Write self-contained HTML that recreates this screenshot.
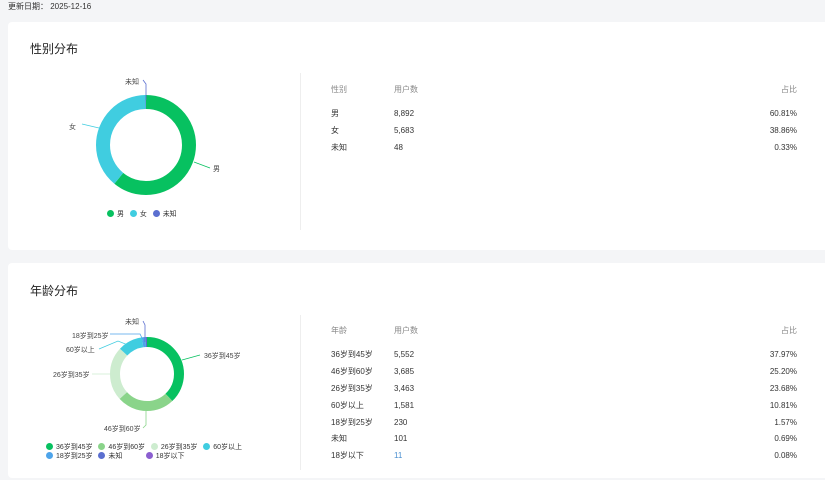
<!DOCTYPE html>
<html><head><meta charset="utf-8"><style>
body{margin:0;width:825px;height:480px;background:#f4f5f7;font-family:"Liberation Sans","Noto Sans CJK SC",sans-serif;color:#333;overflow:hidden;position:relative}
.abs{position:absolute}
.card{position:absolute;left:8px;width:830px;background:#fff;border-radius:4px}
.t{font-size:8px;white-space:nowrap;line-height:10px}
.g{color:#888}
.title{font-size:12px;color:#222}
.vd{position:absolute;left:300px;width:1px;background:#eee}
.dot{display:inline-block;width:7px;height:7px;border-radius:50%;vertical-align:-1px;margin-right:3px}
</style></head><body>
<div class="abs t" style="left:8px;top:2px;color:#333">更新日期： 2025-12-16</div>
<div class="card" style="top:22px;height:228px"></div>
<div class="card" style="top:263px;height:215px"></div>
<div class="abs title" style="left:30px;top:40px">性别分布</div>
<div class="abs title" style="left:30px;top:282px">年龄分布</div>
<div class="vd" style="top:73px;height:157px"></div>
<div class="vd" style="top:315px;height:155px"></div>

<svg class="abs" style="left:0;top:0" width="300" height="480">
<g transform="rotate(-90 146 145)" fill="none" stroke-width="14">
<circle cx="146" cy="145" r="43" stroke="#07c160" stroke-dasharray="164.3 300"/>
<circle cx="146" cy="145" r="43" stroke="#40cde0" stroke-dasharray="105 300" stroke-dashoffset="-164.3"/>
<circle cx="146" cy="145" r="43" stroke="#5b6fd0" stroke-dasharray="0.9 300" stroke-dashoffset="-269.3"/>
</g>
<g fill="none" stroke-width="0.8">
<path d="M194 162 L210 168" stroke="#07c160"/>
<path d="M99 128 L82 124" stroke="#40cde0"/>
<path d="M146 100 L146 84 L143 80" stroke="#5b6fd0"/>
</g>
<g font-size="7" fill="#444">
<text x="213" y="171">男</text><text x="69" y="129">女</text><text x="125" y="84">未知</text>
</g>
<g transform="rotate(-90 147 374)" fill="none" stroke-width="10">
<circle cx="147" cy="374" r="32" stroke="#07c160" stroke-dasharray="76.3 300"/>
<circle cx="147" cy="374" r="32" stroke="#8ad48a" stroke-dasharray="50.7 300" stroke-dashoffset="-76.3"/>
<circle cx="147" cy="374" r="32" stroke="#cdeccf" stroke-dasharray="47.6 300" stroke-dashoffset="-127"/>
<circle cx="147" cy="374" r="32" stroke="#40cde0" stroke-dasharray="21.7 300" stroke-dashoffset="-174.6"/>
<circle cx="147" cy="374" r="32" stroke="#4ea4ea" stroke-dasharray="3.2 300" stroke-dashoffset="-196.3"/>
<circle cx="147" cy="374" r="32" stroke="#5b6fd0" stroke-dasharray="1.4 300" stroke-dashoffset="-199.5"/>
</g>
<g fill="none" stroke-width="0.8">
<path d="M182 360 L200 355" stroke="#07c160"/>
<path d="M146 410 L146 425 L143 428" stroke="#8ad48a"/>
<path d="M111 374 L92 374" stroke="#cdeccf"/>
<path d="M128 345 L118 341 L99 349" stroke="#40cde0"/>
<path d="M144 342 L140 334 L110 334" stroke="#4ea4ea"/>
<path d="M145 342 L145 325 L143 321" stroke="#5b6fd0"/>
</g>
<g font-size="7" fill="#444">
<text x="204" y="358">36岁到45岁</text><text x="104" y="431">46岁到60岁</text><text x="53" y="377">26岁到35岁</text>
<text x="66" y="352">60岁以上</text><text x="72" y="338">18岁到25岁</text><text x="125" y="324">未知</text>
</g>
</svg>

<div class="abs t" style="left:107px;top:210px;font-size:7px"><span class="dot" style="background:#07c160"></span>男&nbsp;&nbsp;&nbsp;<span class="dot" style="background:#40cde0"></span>女&nbsp;&nbsp;&nbsp;<span class="dot" style="background:#5b6fd0"></span>未知</div>
<div class="abs t" style="left:46px;top:443px;font-size:7px;line-height:9px">
<div><span class="dot" style="background:#07c160"></span>36岁到45岁&nbsp;&nbsp;&nbsp;<span class="dot" style="background:#8ad48a"></span>46岁到60岁&nbsp;&nbsp;&nbsp;<span class="dot" style="background:#cdeccf"></span>26岁到35岁&nbsp;&nbsp;&nbsp;<span class="dot" style="background:#40cde0"></span>60岁以上</div>
<div><span class="dot" style="background:#4ea4ea"></span>18岁到25岁&nbsp;&nbsp;&nbsp;<span class="dot" style="background:#5b6fd0"></span>未知&nbsp;&nbsp;&nbsp;&nbsp;&nbsp;&nbsp;&nbsp;&nbsp;&nbsp;&nbsp;&nbsp;&nbsp;<span class="dot" style="background:#8b5fd0"></span>18岁以下</div>
</div>

<div class="abs t g" style="left:331px;top:85px">性别</div><div class="abs t g" style="left:394px;top:85px">用户数</div><div class="abs t g" style="right:28px;top:85px">占比</div>
<div class="abs t" style="left:331px;top:109px">男</div><div class="abs t" style="left:394px;top:109px">8,892</div><div class="abs t" style="right:28px;top:109px">60.81%</div>
<div class="abs t" style="left:331px;top:126px">女</div><div class="abs t" style="left:394px;top:126px">5,683</div><div class="abs t" style="right:28px;top:126px">38.86%</div>
<div class="abs t" style="left:331px;top:143px">未知</div><div class="abs t" style="left:394px;top:143px">48</div><div class="abs t" style="right:28px;top:143px">0.33%</div>

<div class="abs t g" style="left:331px;top:326px">年龄</div><div class="abs t g" style="left:394px;top:326px">用户数</div><div class="abs t g" style="right:28px;top:326px">占比</div>
<div class="abs t" style="left:331px;top:350px">36岁到45岁</div><div class="abs t" style="left:394px;top:350px">5,552</div><div class="abs t" style="right:28px;top:350px">37.97%</div>
<div class="abs t" style="left:331px;top:367px">46岁到60岁</div><div class="abs t" style="left:394px;top:367px">3,685</div><div class="abs t" style="right:28px;top:367px">25.20%</div>
<div class="abs t" style="left:331px;top:384px">26岁到35岁</div><div class="abs t" style="left:394px;top:384px">3,463</div><div class="abs t" style="right:28px;top:384px">23.68%</div>
<div class="abs t" style="left:331px;top:401px">60岁以上</div><div class="abs t" style="left:394px;top:401px">1,581</div><div class="abs t" style="right:28px;top:401px">10.81%</div>
<div class="abs t" style="left:331px;top:418px">18岁到25岁</div><div class="abs t" style="left:394px;top:418px">230</div><div class="abs t" style="right:28px;top:418px">1.57%</div>
<div class="abs t" style="left:331px;top:434px">未知</div><div class="abs t" style="left:394px;top:434px">101</div><div class="abs t" style="right:28px;top:434px">0.69%</div>
<div class="abs t" style="left:331px;top:451px">18岁以下</div><div class="abs t" style="left:394px;top:451px;color:#4a8fd0">11</div><div class="abs t" style="right:28px;top:451px">0.08%</div>
</body></html>
